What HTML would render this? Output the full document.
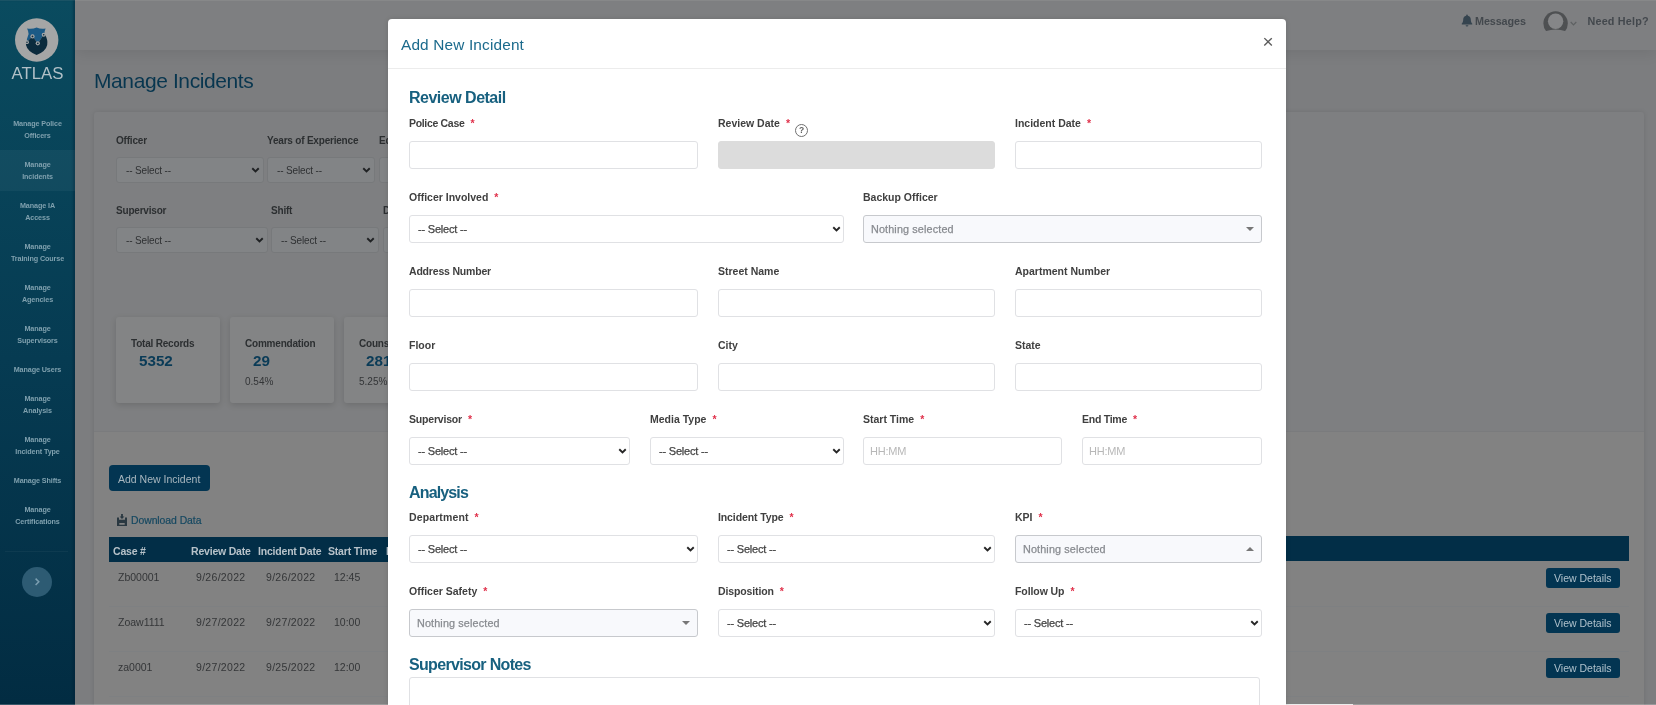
<!DOCTYPE html>
<html lang="en">
<head>
<meta charset="utf-8">
<title>Manage Incidents - Add New Incident</title>
<style>
*{box-sizing:border-box;margin:0;padding:0}
html,body{width:1656px;height:705px;overflow:hidden}
body{position:relative;background:#7c7d7f;font-family:"Liberation Sans",Arial,sans-serif;color:#333}
body>*{will-change:transform}
.abs{position:absolute}
.t{position:absolute;white-space:nowrap;line-height:1}

/* ---------- sidebar ---------- */
#side{position:absolute;left:0;top:0;width:75px;height:705px;background:linear-gradient(180deg,#0a4b5f 0%,#063b52 51%,#022c42 100%);box-shadow:inset -2px 0 2px rgba(0,30,50,.35)}
#side .act{position:absolute;left:0;top:150px;width:75px;height:41px;background:rgba(255,255,255,.045)}
#side .mi{position:absolute;left:0;width:75px;text-align:center;font-size:7.2px;font-weight:bold;color:#7fa0ae;line-height:11.5px;letter-spacing:-.1px}
#logo{position:absolute;left:15px;top:18px;width:44px;height:44px;border-radius:50%;background:#a3a5a6}
#brand{position:absolute;left:0;top:65px;width:75px;text-align:center;font-size:16.8px;color:#b1c0c7;line-height:18px;letter-spacing:.05px}
#tog{position:absolute;left:22px;top:567px;width:30px;height:30px;border-radius:50%;background:#2d5b73}
#sep{position:absolute;left:5px;top:551px;width:63px;height:1px;background:rgba(255,255,255,.045)}

/* ---------- top bar ---------- */
#top{position:absolute;left:75px;top:0;width:1581px;height:50px;background:#7e7f81;box-shadow:0 3px 14px rgba(0,0,0,.09)}
#top .t{font-size:10.8px;color:#43484d;font-weight:bold;letter-spacing:-.1px}

/* ---------- page ---------- */
#h1{left:94px;top:70px;font-size:21px;color:#08364f;letter-spacing:-.4px}
#card{position:absolute;left:94px;top:112px;width:1550px;height:600px;background:#7e7f81;box-shadow:0 0 5px rgba(0,0,0,.10);border-radius:3px}
#card2{position:absolute;left:94px;top:431px;width:1550px;height:280px;background:#828282;border-top:1px solid #7a7b7d}
.bl{font-size:10px;font-weight:bold;color:#2c2f31;letter-spacing:-.2px}
.bsel{position:absolute;height:26px;border:1px solid #77797b;border-radius:3px;background:#828486}
.bsel span{position:absolute;left:9px;top:8px;font-size:10px;line-height:1;color:#2f3133;letter-spacing:-.15px}
.stat{position:absolute;top:317px;width:104px;height:86px;background:#838485;border-radius:3px;box-shadow:0 2px 6px rgba(0,0,0,.14)}
.navy{background:#022e47;color:#a9b7bf}
#addbtn,.vd{background:#033552}
#tbl .t{font-size:10.5px;color:#343638}

/* ---------- modal ---------- */
#modal{will-change:transform;position:absolute;left:388px;top:19px;width:898px;height:700px;background:#fff;border-radius:4px;box-shadow:0 0 5px rgba(0,0,0,.13)}
#mhead{position:absolute;left:0;top:0;width:898px;height:50px;border-bottom:1px solid #ececec}
#mbody{position:absolute;left:0;top:1px}
#mtitle{left:13px;top:18px;font-size:15.4px;color:#1b6a8c;letter-spacing:.15px}
.sec{font-size:16px;font-weight:bold;color:#17607f;letter-spacing:-.5px}
.lb{font-size:10.5px;font-weight:bold;color:#404040;letter-spacing:0}
.lb i{font-style:normal;color:#e0304a;margin-left:6px;font-weight:bold}
.in{position:absolute;height:28px;border:1px solid #e0e1e4;border-radius:3px;background:#fff}
.in.dis{background:#dcdcdc;border-color:#dcdcdc}
.in.bs{background:#f8f9fc;border-color:#c7c9cd}
.in span{position:absolute;left:8px;top:8px;font-size:11px;line-height:1;color:#444;white-space:nowrap;letter-spacing:-.2px;-webkit-text-stroke-width:.25px}
.in.bs span{color:#888b90;font-size:10.8px;left:7px;top:7.500px;letter-spacing:.14px}
.in.ph span{color:#b8b8b8;font-size:11px;left:6px;-webkit-text-stroke-width:0}
#mclose{left:874.500px;top:13px;font-size:19px;color:#5c5c5c;font-weight:normal}
.chev{position:absolute;right:2.4px;top:8.6px;width:9px;height:8px}
.caret{position:absolute;right:7px;top:10.8px;width:0;height:0;border-left:4px solid transparent;border-right:4px solid transparent;border-top:4px solid #777}
.caret.up{border-top:0;border-bottom:4px solid #777;top:11px}
.qm{position:absolute;width:13px;height:13px;border:1px solid #707070;border-radius:50%;font-size:8.5px;font-weight:bold;line-height:11px;text-align:center;color:#606060}
.sn{font-size:15.2px;font-weight:bold;color:#0a3b57;letter-spacing:0}
.sp{font-size:10px;color:#333537}
#dl{font-size:10.4px;color:#154861;-webkit-text-stroke-width:.2px;letter-spacing:-.05px}
.th{font-size:10.5px;font-weight:bold;color:#b7c2c9 !important;letter-spacing:-.2px}
.vd{width:74px;height:20px;border-radius:3px}
.vd .t{left:8px;top:5px;font-size:10.5px;color:#afc0cb !important}
.rl{left:109px;width:1520px;height:1px;background:#7e8082}
.bsel .chev{top:8px;right:3px}
</style>
</head>
<body>

<!-- ======= background page (dimmed by modal backdrop) ======= -->
<div id="top">
  <svg class="abs" style="left:1386px;top:14px;width:12px;height:13px" viewBox="0 0 12 13"><path d="M6 .6c.5 0 .8.3.8.8v.4c1.9.4 3 1.900 3 3.800 0 2.200.6 3.300 1.500 4.100.2.200.1.700-.3.700H1c-.4 0-.5-.5-.3-.7C1.600 8.900 2.200 7.800 2.200 5.600c0-1.900 1.100-3.400 3-3.800v-.4c0-.5.300-.8.800-.8zM4.600 11.200h2.800a1.400 1.400 0 0 1-2.800 0z" fill="#35444f"/></svg>
  <svg class="abs" style="left:1467px;top:9px;width:26px;height:24px" viewBox="0 0 26 24"><defs><clipPath id="avc"><rect x="0" y="0" width="26" height="22"/></clipPath></defs><g clip-path="url(#avc)"><circle cx="13.6" cy="14.4" r="12.2" fill="#4e5052"/><ellipse cx="13.6" cy="26.5" rx="14" ry="6" fill="#7e7f81"/><circle cx="13.6" cy="12.2" r="7.7" fill="#858688"/></g></svg>
  <svg class="abs" style="left:1495px;top:21px;width:7px;height:5px" viewBox="0 0 7 5"><path d="M.7 1l2.800 2.800L6.300 1" fill="none" stroke="#5e6062" stroke-width="1.200"/></svg>
  <span class="t" style="left:1400px;top:16px">Messages</span>
  <span class="t" style="left:1512.500px;top:16px;letter-spacing:.18px">Need Help?</span>
</div>

<span class="t" id="h1">Manage Incidents</span>
<div id="card"></div>
<div id="card2"></div>
<span class="t bl" style="left:116px;top:136px">Officer</span>
<span class="t bl" style="left:267px;top:136px">Years of Experience</span>
<span class="t bl" style="left:379px;top:136px">Education</span>
<div class="bsel" style="left:116px;top:157px;width:148px"><span>-- Select --</span><svg class="chev" viewBox="0 0 10 6"><path d="M1.400 1.100l3.600 3.500 3.600-3.500" fill="none" stroke="#1f2123" stroke-width="2.100"/></svg></div>
<div class="bsel" style="left:267px;top:157px;width:108px"><span>-- Select --</span><svg class="chev" viewBox="0 0 10 6"><path d="M1.400 1.100l3.600 3.500 3.600-3.500" fill="none" stroke="#1f2123" stroke-width="2.100"/></svg></div>
<div class="bsel" style="left:379px;top:157px;width:141px"><span>-- Select --</span><svg class="chev" viewBox="0 0 10 6"><path d="M1.400 1.100l3.600 3.500 3.600-3.500" fill="none" stroke="#1f2123" stroke-width="2.100"/></svg></div>
<span class="t bl" style="left:116px;top:206px">Supervisor</span>
<span class="t bl" style="left:271px;top:206px">Shift</span>
<span class="t bl" style="left:383px;top:206px">Department</span>
<div class="bsel" style="left:116px;top:227px;width:152px"><span>-- Select --</span><svg class="chev" viewBox="0 0 10 6"><path d="M1.400 1.100l3.600 3.500 3.600-3.500" fill="none" stroke="#1f2123" stroke-width="2.100"/></svg></div>
<div class="bsel" style="left:271px;top:227px;width:108px"><span>-- Select --</span><svg class="chev" viewBox="0 0 10 6"><path d="M1.400 1.100l3.600 3.500 3.600-3.500" fill="none" stroke="#1f2123" stroke-width="2.100"/></svg></div>
<div class="bsel" style="left:383px;top:227px;width:137px"><span>-- Select --</span><svg class="chev" viewBox="0 0 10 6"><path d="M1.400 1.100l3.600 3.500 3.600-3.500" fill="none" stroke="#1f2123" stroke-width="2.100"/></svg></div>
<div class="stat" style="left:116px"><span class="t bl" style="left:15px;top:22px">Total Records</span><span class="t sn" style="left:23px;top:36px">5352</span></div>
<div class="stat" style="left:230px"><span class="t bl" style="left:15px;top:22px">Commendation</span><span class="t sn" style="left:23px;top:36px">29</span><span class="t sp" style="left:15px;top:60px">0.54%</span></div>
<div class="stat" style="left:344px"><span class="t bl" style="left:15px;top:22px">Counseling</span><span class="t sn" style="left:22px;top:36px">281</span><span class="t sp" style="left:15px;top:60px">5.25%</span></div>
<div class="navy abs" id="addbtn" style="left:109px;top:465px;width:101px;height:26px;border-radius:4px"><span class="t" style="left:9px;top:9px;font-size:10.5px">Add New Incident</span></div>
<svg class="abs" style="left:117px;top:514px;width:10px;height:12px" viewBox="0 0 10 12"><path fill-rule="evenodd" d="M0 3.400h2v2.300h6V3.400h2V12H0z M2.300 8.900h5.400v1.900H2.300z M4.100 0h1.800v2.400h1.500L5 5 2.600 2.400h1.500z" fill="#2a3841"/></svg>
<span class="t" id="dl" style="left:131px;top:516px">Download Data</span>
<div id="tbl">
<div class="navy abs" style="left:109px;top:537px;width:400px;height:25px"></div><div class="navy abs" style="left:1200px;top:536px;width:429px;height:25px"></div>
<span class="t th" style="left:113px;top:546px">Case #</span>
<span class="t th" style="left:191px;top:546px">Review Date</span>
<span class="t th" style="left:258px;top:546px">Incident Date</span>
<span class="t th" style="left:328px;top:546px">Start Time</span>
<span class="t th" style="left:386px;top:546px">End Time</span>
<span class="t" style="left:118px;top:572px">Zb00001</span><span class="t" style="left:196px;top:572px;letter-spacing:.3px">9/26/2022</span><span class="t" style="left:266px;top:572px;letter-spacing:.3px">9/26/2022</span><span class="t" style="left:334px;top:572px">12:45</span>
<div class="navy abs vd" style="left:1546px;top:568px"><span class="t">View Details</span></div>
<span class="t" style="left:118px;top:617px">Zoaw1111</span><span class="t" style="left:196px;top:617px;letter-spacing:.3px">9/27/2022</span><span class="t" style="left:266px;top:617px;letter-spacing:.3px">9/27/2022</span><span class="t" style="left:334px;top:617px">10:00</span>
<div class="navy abs vd" style="left:1546px;top:613px"><span class="t">View Details</span></div>
<span class="t" style="left:118px;top:662px">za0001</span><span class="t" style="left:196px;top:662px;letter-spacing:.3px">9/27/2022</span><span class="t" style="left:266px;top:662px;letter-spacing:.3px">9/25/2022</span><span class="t" style="left:334px;top:662px">12:00</span>
<div class="navy abs vd" style="left:1546px;top:658px"><span class="t">View Details</span></div>
<div class="abs rl" style="top:606px"></div>
<div class="abs rl" style="top:651px"></div>
<div class="abs rl" style="top:696px"></div>
</div>

<div id="side">
  <svg class="abs" style="left:10px;top:12px;width:56px;height:56px" viewBox="0 0 56 56">
<circle cx="26.7" cy="28" r="21.7" fill="#a5a6a6"/>
<path d="M17.1 16.4Q22 17.6 26.6 15.5Q31.2 17.6 35.6 16.4Q34.4 19 34.4 21.6L33.8 22.6L27.8 31.4L22.5 24.2L16.7 30.2Q16.6 27 18.6 22Q18.4 19 17.1 16.4Z" fill="#1b5a86"/>
<path d="M16.4 30.6L22.5 24.2L27.8 31.4L33.8 22.6L34.6 21.8Q38.2 28 37.2 33Q35.8 39.4 26.6 43Q17.4 39.4 16 33Q15.7 31.6 16.4 30.6Z" fill="#0b2b3d"/>
<g fill="#a5a6a6"><circle cx="17" cy="30.2" r="1.9"/><circle cx="22.5" cy="24.4" r="2.1"/><circle cx="27.8" cy="31.3" r="2.1"/><circle cx="33.7" cy="22.8" r="2"/></g>
<g fill="#0b2b3d"><circle cx="17" cy="30.2" r=".8"/><circle cx="22.5" cy="24.4" r=".9"/><circle cx="27.8" cy="31.3" r=".9"/><circle cx="33.7" cy="22.8" r=".8"/></g>
</svg>
  <div id="brand">ATLAS</div>
  <div class="act"></div>
  <div class="mi" style="top:118px">Manage Police<br>Officers</div>
  <div class="mi" style="top:159px">Manage<br>Incidents</div>
  <div class="mi" style="top:200px">Manage IA<br>Access</div>
  <div class="mi" style="top:241px">Manage<br>Training Course</div>
  <div class="mi" style="top:282px">Manage<br>Agencies</div>
  <div class="mi" style="top:323px">Manage<br>Supervisors</div>
  <div class="mi" style="top:364px">Manage Users</div>
  <div class="mi" style="top:393px">Manage<br>Analysis</div>
  <div class="mi" style="top:434px">Manage<br>Incident Type</div>
  <div class="mi" style="top:475px">Manage Shifts</div>
  <div class="mi" style="top:504px">Manage<br>Certifications</div>
  <div id="sep"></div>
  <div id="tog"><svg viewBox="0 0 30 30" width="30" height="30"><path d="M13.6 11.6l3.2 3.2-3.2 3.2" fill="none" stroke="#7c9fb1" stroke-width="1.5"/></svg></div>
</div>

<div class="abs" style="left:0;top:704px;width:1656px;height:1px;background:rgba(255,255,255,.22)"></div>
<div class="abs" style="left:0;top:0;width:1656px;height:1px;background:rgba(255,255,255,.07)"></div>
<div class="abs" style="left:1286px;top:704px;width:67px;height:1px;background:#ececec"></div>

<!-- ======= modal ======= -->
<div id="modal">
  <div id="mhead"><span class="t" id="mtitle">Add New Incident</span></div>
  <span class="t" id="mclose">×</span>
  <div id="mbody">
  <span class="t sec" style="left:21px;top:70px">Review Detail</span>
  <span class="t lb" style="left:21px;top:98px;letter-spacing:-.32px">Police Case<i>*</i></span>
  <div class="in" style="left:21px;top:121px;width:289px"></div>
  <span class="t lb" style="left:330px;top:98px">Review Date<i>*</i></span>
  <div class="in dis" style="left:330px;top:121px;width:277px"></div>
  <span class="qm" style="left:407px;top:104px">?</span>
  <span class="t lb" style="left:627px;top:98px">Incident Date<i>*</i></span>
  <div class="in" style="left:627px;top:121px;width:247px"></div>
  <span class="t lb" style="left:21px;top:172px">Officer Involved<i>*</i></span>
  <div class="in" style="left:21px;top:195px;width:435px"><span>-- Select --</span><svg class="chev" viewBox="0 0 10 6"><path d="M1.400 1.100l3.600 3.500 3.600-3.500" fill="none" stroke="#262626" stroke-width="2.100"/></svg></div>
  <span class="t lb" style="left:475px;top:172px">Backup Officer</span>
  <div class="in bs" style="left:475px;top:195px;width:399px"><span>Nothing selected</span><b class="caret"></b></div>
  <span class="t lb" style="left:21px;top:246px;letter-spacing:-.19px">Address Number</span>
  <div class="in" style="left:21px;top:269px;width:289px"></div>
  <span class="t lb" style="left:330px;top:246px">Street Name</span>
  <div class="in" style="left:330px;top:269px;width:277px"></div>
  <span class="t lb" style="left:627px;top:246px">Apartment Number</span>
  <div class="in" style="left:627px;top:269px;width:247px"></div>
  <span class="t lb" style="left:21px;top:320px">Floor</span>
  <div class="in" style="left:21px;top:343px;width:289px"></div>
  <span class="t lb" style="left:330px;top:320px">City</span>
  <div class="in" style="left:330px;top:343px;width:277px"></div>
  <span class="t lb" style="left:627px;top:320px">State</span>
  <div class="in" style="left:627px;top:343px;width:247px"></div>
  <span class="t lb" style="left:21px;top:394px;letter-spacing:-.19px">Supervisor<i>*</i></span>
  <div class="in" style="left:21px;top:417px;width:221px"><span>-- Select --</span><svg class="chev" viewBox="0 0 10 6"><path d="M1.400 1.100l3.600 3.500 3.600-3.500" fill="none" stroke="#262626" stroke-width="2.100"/></svg></div>
  <span class="t lb" style="left:262px;top:394px">Media Type<i>*</i></span>
  <div class="in" style="left:262px;top:417px;width:194px"><span>-- Select --</span><svg class="chev" viewBox="0 0 10 6"><path d="M1.400 1.100l3.600 3.500 3.600-3.500" fill="none" stroke="#262626" stroke-width="2.100"/></svg></div>
  <span class="t lb" style="left:475px;top:394px">Start Time<i>*</i></span>
  <div class="in ph" style="left:475px;top:417px;width:199px"><span>HH:MM</span></div>
  <span class="t lb" style="left:694px;top:394px;letter-spacing:-.26px">End Time<i>*</i></span>
  <div class="in ph" style="left:694px;top:417px;width:180px"><span>HH:MM</span></div>
  <span class="t sec" style="left:21px;top:465px;letter-spacing:-.85px">Analysis</span>
  <span class="t lb" style="left:21px;top:492px;letter-spacing:.12px">Department<i>*</i></span>
  <div class="in" style="left:21px;top:515px;width:289px"><span>-- Select --</span><svg class="chev" viewBox="0 0 10 6"><path d="M1.400 1.100l3.600 3.500 3.600-3.500" fill="none" stroke="#262626" stroke-width="2.100"/></svg></div>
  <span class="t lb" style="left:330px;top:492px;letter-spacing:-.11px">Incident Type<i>*</i></span>
  <div class="in" style="left:330px;top:515px;width:277px"><span>-- Select --</span><svg class="chev" viewBox="0 0 10 6"><path d="M1.400 1.100l3.600 3.500 3.600-3.500" fill="none" stroke="#262626" stroke-width="2.100"/></svg></div>
  <span class="t lb" style="left:627px;top:492px">KPI<i>*</i></span>
  <div class="in bs" style="left:627px;top:515px;width:247px"><span>Nothing selected</span><b class="caret up"></b></div>
  <span class="t lb" style="left:21px;top:566px">Officer Safety<i>*</i></span>
  <div class="in bs" style="left:21px;top:589px;width:289px"><span>Nothing selected</span><b class="caret"></b></div>
  <span class="t lb" style="left:330px;top:566px;letter-spacing:-.13px">Disposition<i>*</i></span>
  <div class="in" style="left:330px;top:589px;width:277px"><span>-- Select --</span><svg class="chev" viewBox="0 0 10 6"><path d="M1.400 1.100l3.600 3.500 3.600-3.500" fill="none" stroke="#262626" stroke-width="2.100"/></svg></div>
  <span class="t lb" style="left:627px;top:566px;letter-spacing:-.08px">Follow Up<i>*</i></span>
  <div class="in" style="left:627px;top:589px;width:247px"><span>-- Select --</span><svg class="chev" viewBox="0 0 10 6"><path d="M1.400 1.100l3.600 3.500 3.600-3.500" fill="none" stroke="#262626" stroke-width="2.100"/></svg></div>
  <span class="t sec" style="left:21px;top:637px;letter-spacing:-.67px">Supervisor Notes</span>
  <div class="in" style="left:21px;top:657px;width:851px;height:60px"></div>
  </div>
</div>

</body>
</html>
